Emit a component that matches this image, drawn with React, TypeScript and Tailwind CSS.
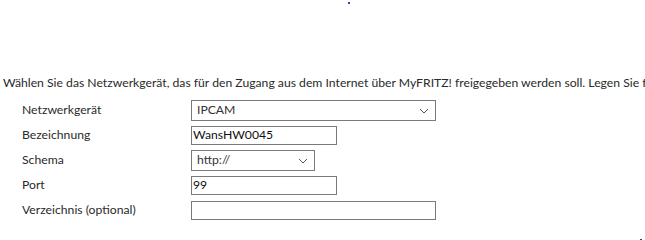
import React from 'react';

function Chevron() {
  return (
    <svg width="10" height="6" viewBox="0 0 10 6" className="shrink-0">
      <path d="M1 1l4 4 4-4" fill="none" stroke="#555" strokeWidth="1" />
    </svg>
  );
}

function SelectBox({ value, width }: { value: string; width: string }) {
  return (
    <div className={`flex h-[21px] ${width} items-center justify-between border border-[#7a7a7a] bg-white pl-[5px] pr-[6px] text-[#333]`}>
      <span>{value}</span>
      <Chevron />
    </div>
  );
}

function TextBox({ value, width }: { value: string; width: string }) {
  return (
    <div className={`flex h-[19px] ${width} items-center border border-[#7a7a7a] bg-white pl-px text-[#111]`}>
      {value}
    </div>
  );
}

const rows = [
  { label: 'Netzwerkgerät', field: <SelectBox value="IPCAM" width="w-[245px]" /> },
  { label: 'Bezeichnung', field: <TextBox value="WansHW0045" width="w-[146px]" /> },
  { label: 'Schema', field: <SelectBox value="http://" width="w-[124px]" /> },
  { label: 'Port', field: <TextBox value="99" width="w-[146px]" /> },
  { label: 'Verzeichnis (optional)', field: <TextBox value="" width="w-[245px]" /> },
];

export default function App() {
  return (
    <div className="h-[240px] w-[645px] overflow-hidden bg-white text-[12.2px] text-[#2a2a2a]" style={{ fontFamily: 'Lato, "Noto Sans", sans-serif' }}>
      <div className="ml-[348px] mt-[2px] h-[2px] w-[2px] bg-[#3b3f8f]" />
      <p className="mt-[71px] whitespace-nowrap pl-[3px] leading-[16px]">
        Wählen Sie das Netzwerkgerät, das für den Zugang aus dem Internet über MyFRITZ! freigegeben werden soll. Legen Sie fest, unter welcher Adresse es erreichbar ist.
      </p>
      <div className="mt-[7px] flex flex-col">
        {rows.map((r) => (
          <div key={r.label} className="flex h-[25px] items-center">
            <div className="w-[191px] shrink-0 pl-[22px]">{r.label}</div>
            {r.field}
          </div>
        ))}
      </div>
      <div className="ml-[640px] mt-[16px] h-[2px] w-[2px] bg-[#3b3f8f]" />
    </div>
  );
}
